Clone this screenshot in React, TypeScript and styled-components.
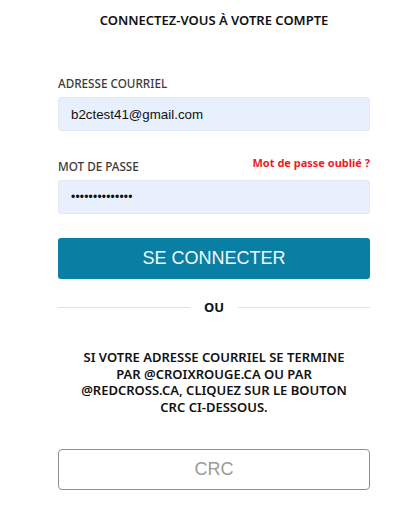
import React from "react";
import styled, { createGlobalStyle } from "styled-components";

const Global = createGlobalStyle`
  html, body { margin: 0; padding: 0; background: #fff; }
  body { font-family: "Noto Sans", "Open Sans", sans-serif; }
  * { box-sizing: border-box; }
`;

const Page = styled.div`
  width: 411px;
  height: 510px;
  padding: 12px 41px 0 58px;
`;

const Title = styled.h1`
  margin: 0;
  text-align: center;
  font-size: 13px;
  font-weight: 600;
  color: #111;
  line-height: 17px;
`;

const Form = styled.div`
  margin-top: 46px;
  display: flex;
  flex-direction: column;
`;

const LabelRow = styled.div`
  display: flex;
  justify-content: space-between;
  align-items: flex-end;
  height: 16px;
  margin-bottom: 6px;
`;

const Label = styled.label`
  font-size: 11.7px;
  font-weight: 500;
  color: #3a3a3a;
  line-height: 16px;
`;

const Forgot = styled.a`
  font-size: 11px;
  font-weight: 700;
  color: #ee1c25;
  text-decoration: none;
  line-height: 16px;
  position: relative;
  top: -3px;
`;

const Input = styled.div<{ $dots?: boolean }>`
  height: 34px;
  background: #e8f0fe;
  border: 1px solid #e3e8f0;
  border-radius: 3px;
  display: flex;
  align-items: center;
  padding-left: 12px;
  font-family: "Liberation Sans", Arial, sans-serif;
  font-size: ${(p) => (p.$dots ? "12px" : "13.33px")};
  letter-spacing: ${(p) => (p.$dots ? "0.2px" : "0")};
  color: #111;
  margin-bottom: ${(p) => (p.$dots ? "24px" : "27px")};
`;

const PrimaryButton = styled.button`
  height: 41px;
  border: none;
  border-radius: 3px;
  background: #0a7fa4;
  color: #f4f8fa;
  font-family: "Liberation Sans", Arial, sans-serif;
  font-size: 18px;
  width: 100%;
  padding: 0;
`;

const Divider = styled.div`
  display: flex;
  align-items: center;
  gap: 14px;
  margin-top: 20px;
  &::before, &::after {
    content: "";
    flex: 1;
    height: 1px;
    background: #e2e2e2;
  }
`;

const Or = styled.span`
  font-size: 13px;
  font-weight: 700;
  color: #111;
  line-height: 16px;
`;

const Note = styled.p`
  margin: 34px 0 0;
  text-align: center;
  font-size: 13px;
  font-weight: 600;
  color: #111;
  line-height: 16.5px;
  padding: 0 14px;
`;

const OutlineButton = styled.button`
  margin-top: 34px;
  height: 41px;
  width: 100%;
  background: #fff;
  border: 1px solid #8f8f8f;
  border-radius: 4px;
  color: #9a9a9a;
  font-family: "Liberation Sans", Arial, sans-serif;
  font-size: 18px;
  padding: 0;
`;

export default function App() {
  return (
    <>
      <Global />
      <Page>
        <Title>CONNECTEZ-VOUS À VOTRE COMPTE</Title>
        <Form>
          <LabelRow>
            <Label>ADRESSE COURRIEL</Label>
          </LabelRow>
          <Input>b2ctest41@gmail.com</Input>
          <LabelRow>
            <Label>MOT DE PASSE</Label>
            <Forgot href="#">Mot de passe oublié ?</Forgot>
          </LabelRow>
          <Input $dots>••••••••••••••</Input>
          <PrimaryButton>SE CONNECTER</PrimaryButton>
          <Divider>
            <Or>OU</Or>
          </Divider>
          <Note>
            SI VOTRE ADRESSE COURRIEL SE TERMINE PAR @CROIXROUGE.CA OU PAR @REDCROSS.CA, CLIQUEZ SUR LE BOUTON CRC CI-DESSOUS.
          </Note>
          <OutlineButton>CRC</OutlineButton>
        </Form>
      </Page>
    </>
  );
}
